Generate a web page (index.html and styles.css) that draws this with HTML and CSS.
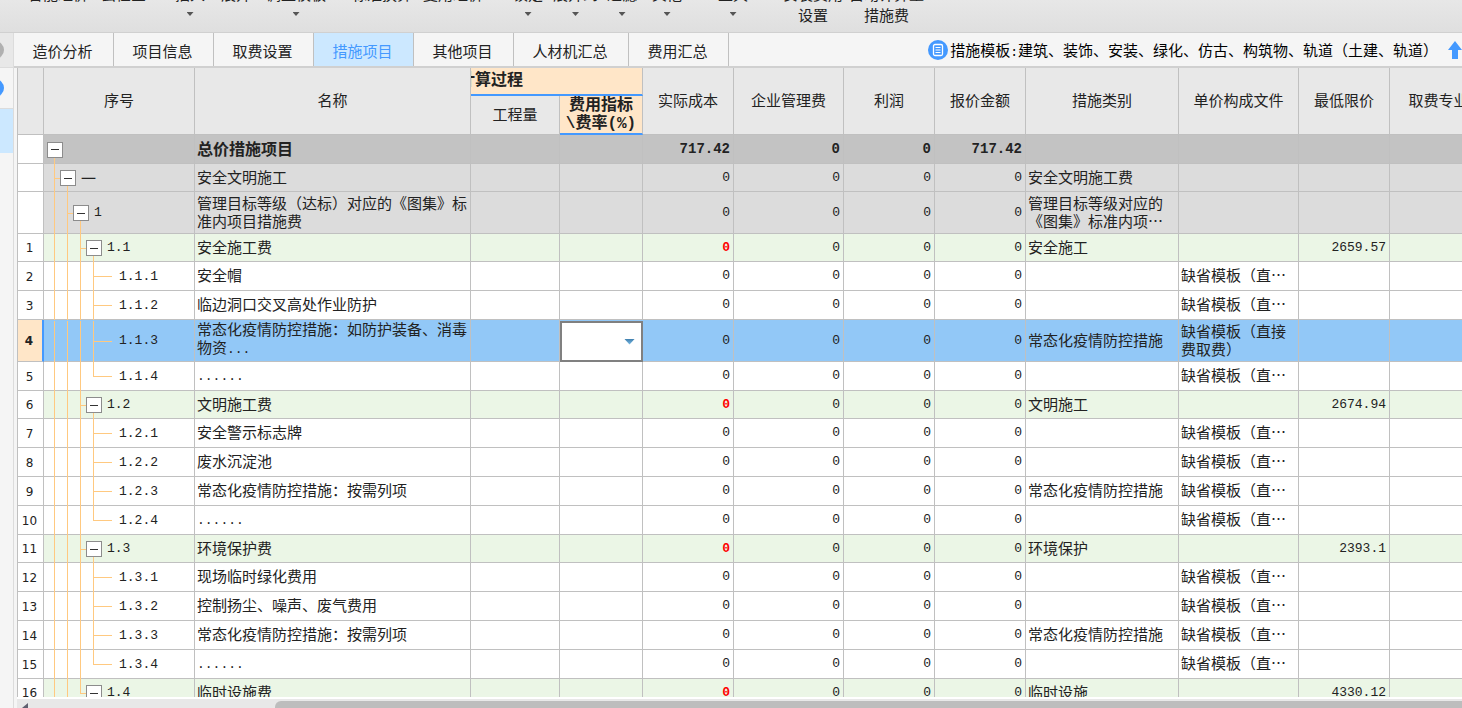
FILE: index.html
```html
<!DOCTYPE html>
<html lang="zh-CN">
<head>
<meta charset="utf-8">
<title>措施项目</title>
<link rel="stylesheet" href="styles.css">
</head>
<body>
<header class="ribbon">
  <button class="tool">智能组价</button>
  <button class="tool">云检查</button>
  <button class="tool">插入<i class="caret"></i></button>
  <button class="tool">展开</button>
  <button class="tool">调整模板<i class="caret"></i></button>
  <button class="tool">标准换算</button>
  <button class="tool">复用组价</button>
  <button class="tool">锁定<i class="caret"></i></button>
  <button class="tool">展开到<i class="caret"></i></button>
  <button class="tool">过滤<i class="caret"></i></button>
  <button class="tool">其他<i class="caret"></i></button>
  <button class="tool">工具<i class="caret"></i></button>
  <button class="tool">安装费用<span>设置</span></button>
  <button class="tool">自动计算量<span>措施费</span></button>
</header>
<div class="workspace">
  <aside class="rail">
    <div class="rail-head"><i class="dot"></i></div>
    <div class="rail-item"><i class="dot dot-blue"></i></div>
    <div class="rail-current"></div>
  </aside>
  <main class="panel">
    <nav class="tabs">
      <button class="tab">造价分析</button>
      <button class="tab">项目信息</button>
      <button class="tab">取费设置</button>
      <button class="tab active">措施项目</button>
      <button class="tab">其他项目</button>
      <button class="tab wide">人材机汇总</button>
      <button class="tab">费用汇总</button>
      <div class="template">
        <svg width="20" height="20" viewBox="0 0 20 20" aria-hidden="true"><circle cx="10" cy="10" r="10" fill="#4499ff"/><rect x="5.5" y="4.5" width="9" height="11" rx="1.5" fill="none" stroke="#fff" stroke-width="1.3"/><path d="M7.5 7.5h5M7.5 10h5M7.5 12.5h5" stroke="#fff" stroke-width="1.1"/></svg>
        <span class="template-text">措施模板<b class="colon">:</b>建筑、装饰、安装、绿化、仿古、构筑物、轨道（土建、轨道）</span>
        <button class="up" aria-label="上移"><svg width="14" height="18" viewBox="0 0 14 18" aria-hidden="true"><path d="M7 0l7 9h-4v9H4V9H0z" fill="#4499ff"/></svg></button>
      </div>
    </nav>
    <div class="sheet">
      <table>
        <colgroup><col class="w-no"><col class="w-tree"><col class="w-name"><col class="w-qty"><col class="w-rate"><col class="w-91"><col class="w-mgmt"><col class="w-91"><col class="w-91"><col class="w-kind"><col class="w-file"><col class="w-91"><col class="w-spec"></colgroup>
        <thead>
          <tr class="head-top"><th rowspan="2"></th><th rowspan="2">序号</th><th rowspan="2">名称</th><th colspan="2" class="hot process">计算过程</th><th rowspan="2">实际成本</th><th rowspan="2">企业管理费</th><th rowspan="2">利润</th><th rowspan="2">报价金额</th><th rowspan="2">措施类别</th><th rowspan="2">单价构成文件</th><th rowspan="2">最低限价</th><th rowspan="2">取费专业</th></tr>
          <tr class="head-sub"><th>工程量</th><th class="hot rate">费用指标<br>\费率(%)</th></tr>
        </thead>
        <tbody>
          <tr class="total"><td class="no"></td><td class="seq"><div class="tree"><i class="node"><button class="toggle" aria-label="折叠"></button></i></div></td><td>总价措施项目</td><td></td><td></td><td class="num">717.42</td><td class="num">0</td><td class="num">0</td><td class="num">717.42</td><td></td><td></td><td></td><td></td></tr>
          <tr class="group"><td class="no"></td><td class="seq"><div class="tree"><i class="guide tee"></i><i class="node"><button class="toggle" aria-label="折叠"></button></i><span class="cjk">一</span></div></td><td>安全文明施工</td><td></td><td></td><td class="num">0</td><td class="num">0</td><td class="num">0</td><td class="num">0</td><td>安全文明施工费</td><td></td><td></td><td></td></tr>
          <tr class="group tall"><td class="no"></td><td class="seq"><div class="tree"><i class="guide"></i><i class="guide tee"></i><i class="node"><button class="toggle" aria-label="折叠"></button></i><span>1</span></div></td><td>管理目标等级（达标）对应的《图集》标准内项目措施费</td><td></td><td></td><td class="num">0</td><td class="num">0</td><td class="num">0</td><td class="num">0</td><td>管理目标等级对应的《图集》标准内项…</td><td></td><td></td><td></td></tr>
          <tr class="section"><td class="no">1</td><td class="seq"><div class="tree"><i class="guide"></i><i class="guide"></i><i class="guide tee"></i><i class="node"><button class="toggle" aria-label="折叠"></button></i><span>1.1</span></div></td><td>安全施工费</td><td></td><td></td><td class="num zero">0</td><td class="num">0</td><td class="num">0</td><td class="num">0</td><td>安全施工</td><td></td><td class="num">2659.57</td><td></td></tr>
          <tr><td class="no">2</td><td class="seq"><div class="tree"><i class="guide"></i><i class="guide"></i><i class="guide"></i><i class="guide leaf"></i><span>1.1.1</span></div></td><td>安全帽</td><td></td><td></td><td class="num">0</td><td class="num">0</td><td class="num">0</td><td class="num">0</td><td></td><td>缺省模板（直…</td><td></td><td></td></tr>
          <tr><td class="no">3</td><td class="seq"><div class="tree"><i class="guide"></i><i class="guide"></i><i class="guide"></i><i class="guide leaf"></i><span>1.1.2</span></div></td><td>临边洞口交叉高处作业防护</td><td></td><td></td><td class="num">0</td><td class="num">0</td><td class="num">0</td><td class="num">0</td><td></td><td>缺省模板（直…</td><td></td><td></td></tr>
          <tr class="selected"><td class="no">4</td><td class="seq"><div class="tree"><i class="guide"></i><i class="guide"></i><i class="guide"></i><i class="guide leaf"></i><span>1.1.3</span></div></td><td>常态化疫情防控措施：如防护装备、消毒物资<span class="dots">...</span></td><td></td><td class="editor"><div class="combo"><select aria-label="费用指标\费率(%)"><option></option></select></div></td><td class="num">0</td><td class="num">0</td><td class="num">0</td><td class="num">0</td><td>常态化疫情防控措施</td><td>缺省模板（直接费取费）</td><td></td><td></td></tr>
          <tr><td class="no">5</td><td class="seq"><div class="tree"><i class="guide"></i><i class="guide"></i><i class="guide"></i><i class="guide leaf last"></i><span>1.1.4</span></div></td><td><span class="dots">......</span></td><td></td><td></td><td class="num">0</td><td class="num">0</td><td class="num">0</td><td class="num">0</td><td></td><td>缺省模板（直…</td><td></td><td></td></tr>
          <tr class="section"><td class="no">6</td><td class="seq"><div class="tree"><i class="guide"></i><i class="guide"></i><i class="guide tee"></i><i class="node"><button class="toggle" aria-label="折叠"></button></i><span>1.2</span></div></td><td>文明施工费</td><td></td><td></td><td class="num zero">0</td><td class="num">0</td><td class="num">0</td><td class="num">0</td><td>文明施工</td><td></td><td class="num">2674.94</td><td></td></tr>
          <tr><td class="no">7</td><td class="seq"><div class="tree"><i class="guide"></i><i class="guide"></i><i class="guide"></i><i class="guide leaf"></i><span>1.2.1</span></div></td><td>安全警示标志牌</td><td></td><td></td><td class="num">0</td><td class="num">0</td><td class="num">0</td><td class="num">0</td><td></td><td>缺省模板（直…</td><td></td><td></td></tr>
          <tr><td class="no">8</td><td class="seq"><div class="tree"><i class="guide"></i><i class="guide"></i><i class="guide"></i><i class="guide leaf"></i><span>1.2.2</span></div></td><td>废水沉淀池</td><td></td><td></td><td class="num">0</td><td class="num">0</td><td class="num">0</td><td class="num">0</td><td></td><td>缺省模板（直…</td><td></td><td></td></tr>
          <tr><td class="no">9</td><td class="seq"><div class="tree"><i class="guide"></i><i class="guide"></i><i class="guide"></i><i class="guide leaf"></i><span>1.2.3</span></div></td><td>常态化疫情防控措施：按需列项</td><td></td><td></td><td class="num">0</td><td class="num">0</td><td class="num">0</td><td class="num">0</td><td>常态化疫情防控措施</td><td>缺省模板（直…</td><td></td><td></td></tr>
          <tr><td class="no">10</td><td class="seq"><div class="tree"><i class="guide"></i><i class="guide"></i><i class="guide"></i><i class="guide leaf last"></i><span>1.2.4</span></div></td><td><span class="dots">......</span></td><td></td><td></td><td class="num">0</td><td class="num">0</td><td class="num">0</td><td class="num">0</td><td></td><td>缺省模板（直…</td><td></td><td></td></tr>
          <tr class="section"><td class="no">11</td><td class="seq"><div class="tree"><i class="guide"></i><i class="guide"></i><i class="guide tee"></i><i class="node"><button class="toggle" aria-label="折叠"></button></i><span>1.3</span></div></td><td>环境保护费</td><td></td><td></td><td class="num zero">0</td><td class="num">0</td><td class="num">0</td><td class="num">0</td><td>环境保护</td><td></td><td class="num">2393.1</td><td></td></tr>
          <tr><td class="no">12</td><td class="seq"><div class="tree"><i class="guide"></i><i class="guide"></i><i class="guide"></i><i class="guide leaf"></i><span>1.3.1</span></div></td><td>现场临时绿化费用</td><td></td><td></td><td class="num">0</td><td class="num">0</td><td class="num">0</td><td class="num">0</td><td></td><td>缺省模板（直…</td><td></td><td></td></tr>
          <tr><td class="no">13</td><td class="seq"><div class="tree"><i class="guide"></i><i class="guide"></i><i class="guide"></i><i class="guide leaf"></i><span>1.3.2</span></div></td><td>控制扬尘、噪声、废气费用</td><td></td><td></td><td class="num">0</td><td class="num">0</td><td class="num">0</td><td class="num">0</td><td></td><td>缺省模板（直…</td><td></td><td></td></tr>
          <tr><td class="no">14</td><td class="seq"><div class="tree"><i class="guide"></i><i class="guide"></i><i class="guide"></i><i class="guide leaf"></i><span>1.3.3</span></div></td><td>常态化疫情防控措施：按需列项</td><td></td><td></td><td class="num">0</td><td class="num">0</td><td class="num">0</td><td class="num">0</td><td>常态化疫情防控措施</td><td>缺省模板（直…</td><td></td><td></td></tr>
          <tr><td class="no">15</td><td class="seq"><div class="tree"><i class="guide"></i><i class="guide"></i><i class="guide"></i><i class="guide leaf last"></i><span>1.3.4</span></div></td><td><span class="dots">......</span></td><td></td><td></td><td class="num">0</td><td class="num">0</td><td class="num">0</td><td class="num">0</td><td></td><td>缺省模板（直…</td><td></td><td></td></tr>
          <tr class="section"><td class="no">16</td><td class="seq"><div class="tree"><i class="guide"></i><i class="guide"></i><i class="guide tee last"></i><i class="node"><button class="toggle" aria-label="折叠"></button></i><span>1.4</span></div></td><td>临时设施费</td><td></td><td></td><td class="num zero">0</td><td class="num">0</td><td class="num">0</td><td class="num">0</td><td>临时设施</td><td></td><td class="num">4330.12</td><td></td></tr>
        </tbody>
      </table>
    </div>
    <div class="scrollbar"><i class="scroll-left"></i><i class="thumb"></i></div>
  </main>
</div>
</body>
</html>
```

FILE: styles.css
```css
:root {
  --cjk: "Noto Sans CJK SC", sans-serif;
  --mono: "Liberation Mono", "Noto Sans CJK SC", monospace;
  --line: #c0c0c0;
  --blue: #4499ff;
  --guide: linear-gradient(#ffc980, #ffc980);
}

* { box-sizing: border-box; }

body {
  margin: 0;
  height: 100vh;
  display: flex;
  flex-direction: column;
  overflow: hidden;
  background: #f5f5f5;
  color: #222;
  font: 15px/18px var(--cjk);
}

button {
  border: 0;
  padding: 0;
  background: none;
  color: inherit;
  font: inherit;
}

/* Ribbon, scrolled so only the foot of its labels shows */
.ribbon {
  flex: none;
  height: 33px;
  overflow: hidden;
  display: grid;
  grid-template-columns: 73px 74px 46px 45px 86px 71px 90px 40px 54px 45px 66px 65px 66px auto;
  justify-items: start;
  align-items: end;
  align-content: end;
  padding: 0 0 8px 28px;
  background: linear-gradient(#e7e7e7, #dfdfdf);
  border-bottom: 1px solid #d0d0d0;
}

.tool {
  display: flex;
  flex-direction: column;
  align-items: center;
  gap: 3px;
  height: 39px;
  white-space: nowrap;
}

.caret {
  width: 7px;
  height: 4px;
  margin-top: 6px;
  background: #555;
  clip-path: polygon(0 0, 100% 0, 50% 100%);
}

.workspace {
  flex: 1;
  min-height: 0;
  display: flex;
}

/* Left rail */
.rail {
  flex: none;
  width: 14px;
  border-right: 1px solid #dcdcdc;
  overflow: hidden;
}

.rail-head, .rail-item {
  display: flex;
  align-items: center;
  border-bottom: 1px solid #dcdcdc;
}

.rail-head { height: 35px; background: #e8e8e8; }
.rail-item { height: 41px; }
.rail-current { height: 44px; background: #cce8ff; }

.dot {
  flex: none;
  width: 18px;
  height: 18px;
  margin-left: -14px;
  border-radius: 50%;
  background: #b0b0b0;
}

.dot-blue { background: var(--blue); }

.panel {
  flex: 1;
  min-width: 0;
  display: flex;
  flex-direction: column;
}

/* Tabs */
.tabs {
  flex: none;
  height: 35px;
  display: flex;
  border-bottom: 2px solid #d0d0d0;
}

.tab {
  flex: none;
  width: 100px;
  padding: 2px 2px 0 0;
  border-right: 1px solid var(--line);
}

.tab.wide { width: 115px; }
.tab.active { background: #cce8ff; color: var(--blue); }

.template {
  margin-left: auto;
  display: flex;
  align-items: center;
  gap: 2px;
  color: #000;
  white-space: nowrap;
}

.template-text { padding-top: 3px; }
.colon { font: 13px/18px var(--mono); }
.up { display: flex; margin-left: 8px; }

/* Sheet */
.sheet {
  flex: 1;
  min-height: 0;
  overflow: hidden;
  padding-left: 3px;
}

table {
  width: 1470px;
  table-layout: fixed;
  border-collapse: separate;
  border-spacing: 0;
  border-left: 1px solid var(--line);
}

.w-no { width: 26px; }
.w-tree { width: 151px; }
.w-name { width: 276px; }
.w-qty { width: 89px; }
.w-rate { width: 83px; }
.w-91 { width: 91px; }
.w-mgmt { width: 110px; }
.w-kind { width: 153px; }
.w-file { width: 120px; }
.w-spec { width: 98px; }

th, td {
  padding: 0 2px 2px;
  border-right: 1px solid var(--line);
  border-bottom: 1px solid var(--line);
}

th {
  background: #e8e8e8;
  font-weight: 400;
}

.head-top { height: 28px; }
.head-sub { height: 39px; }

th.hot {
  padding-bottom: 0;
  background: #ffe6c8;
  border-bottom: 2px solid var(--blue);
  font: 700 16px/18px var(--mono);
}

/* The group title begins left of the scrolled edge */
.process {
  overflow: hidden;
  text-align: left;
  text-indent: -14px;
}

tr { --h: 29px; }
.section, .group { --h: 28px; }
.tall { --h: 42px; }
.selected { --h: 41px; }

td {
  height: var(--h);
  background: #fff;
}

.total td { background: #c3c3c3; font-size: 16px; font-weight: 700; }
.group td { background: #dcdcdc; }
.section td { background: #ebf6e6; }
.selected td { background: #92c8f7; }

td.num {
  padding: 0 3px 0 0;
  text-align: right;
  font: 13px/18px var(--mono);
}

.total td.num { font-size: 14px; font-weight: 700; }
td.zero { color: #f00; font-weight: 700; }

tbody td.no {
  padding: 1px 2px 0 0;
  background: #fff;
  text-align: center;
  font: 12px/18px "DejaVu Sans", sans-serif;
}

.selected td.no {
  background: #ffe6c8;
  border-right: 2px solid var(--blue);
  font-weight: 700;
}

.dots { font: 13px/18px var(--mono); }

/* Outline tree */
td.seq { padding: 0; }

.tree {
  display: flex;
  align-items: center;
  height: var(--h);
  margin-bottom: -1px;
  padding-left: 4px;
  font: 13px/18px var(--mono);
}

.tree span { padding-left: 7px; }
.tree .cjk { font: 15px/18px var(--cjk); }

.guide, .node {
  flex: none;
  align-self: stretch;
  width: 13px;
  background: var(--guide) 6px 0 / 1px 100% no-repeat;
}

.tee {
  background:
    var(--guide) 6px 0 / 1px 100% no-repeat,
    var(--guide) 6px 50% / 7px 1px no-repeat;
}

.tee.last {
  background:
    var(--guide) 6px 0 / 1px 50% no-repeat,
    var(--guide) 6px 50% / 7px 1px no-repeat;
}

.leaf {
  width: 25px;
  background:
    var(--guide) 6px 0 / 1px 100% no-repeat,
    var(--guide) 6px 50% / 19px 1px no-repeat;
}

.leaf.last {
  background:
    var(--guide) 6px 0 / 1px 50% no-repeat,
    var(--guide) 6px 50% / 19px 1px no-repeat;
}

.node {
  display: flex;
  align-items: center;
  justify-content: center;
  background: var(--guide) 6px 100% / 1px 50% no-repeat;
}

.toggle {
  flex: none;
  width: 16px;
  height: 16px;
  border: 1px solid #8c8c8c;
  background: linear-gradient(#333, #333) center / 8px 1px no-repeat #fff;
}

/* Cell editor */
td.editor { padding: 0; border-right: 0; }

.combo {
  position: relative;
  height: var(--h);
  margin-bottom: -1px;
}

.combo select {
  display: block;
  width: 100%;
  height: 100%;
  appearance: none;
  border: 2px solid #808080;
  border-radius: 0;
  background: #fff;
}

.combo::after {
  content: "";
  position: absolute;
  right: 8px;
  top: 18px;
  width: 11px;
  height: 6px;
  background: linear-gradient(#3f7fae, #7fc0ea);
  clip-path: polygon(0 0, 100% 0, 50% 100%);
  pointer-events: none;
}

/* Horizontal scrollbar */
.scrollbar {
  flex: none;
  height: 11px;
  display: flex;
  align-items: flex-end;
  margin-left: 3px;
  border-top: 2px solid #fff;
  background: #e8e8e8;
}

.scroll-left {
  width: 6px;
  height: 5px;
  margin-left: 5px;
  background: #606070;
  clip-path: polygon(100% 0, 100% 100%, 0 100%);
}

.thumb {
  flex: 1;
  height: 7px;
  margin-left: 247px;
  border-radius: 6px 0 0 0;
  background: #bdbdbd;
}
```
